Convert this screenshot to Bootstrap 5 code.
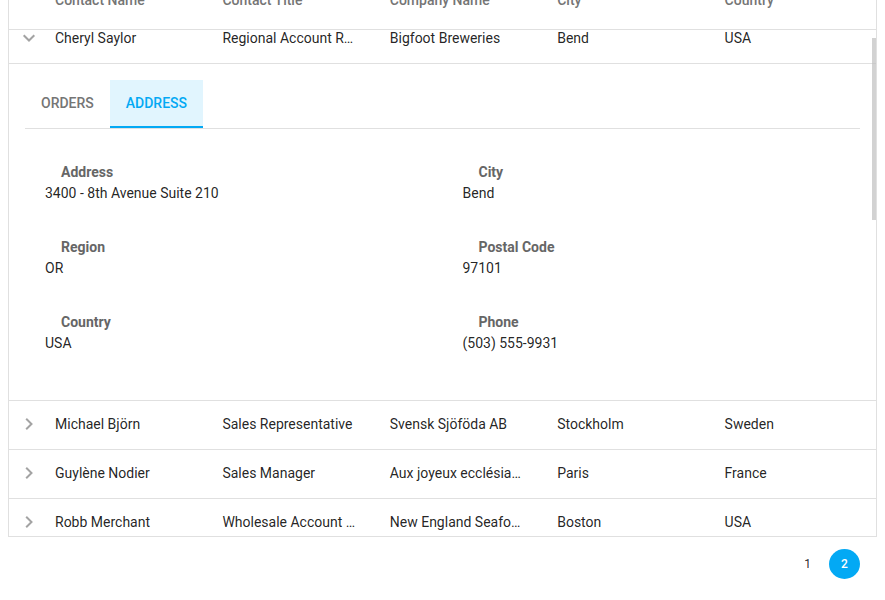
<!DOCTYPE html>
<html lang="en">
<head>
<meta charset="utf-8">
<meta name="viewport" content="width=device-width, initial-scale=1">
<title>Contacts</title>
<link href="https://cdn.jsdelivr.net/npm/bootstrap@5.3.0/dist/css/bootstrap.min.css" rel="stylesheet">
<style>
  :root { --line: #e0e0e0; --accent: #03a9f4; --muted: #757575; }
  body { font-family: Roboto, sans-serif; font-size: 14px; line-height: 21px; color: rgba(0, 0, 0, .87); }
  .grid-panel { border: 1px solid var(--line); border-top: 0; min-height: 0; }
  .grid-head { margin-top: -27px; border-bottom: 1px solid var(--line); }
  .grid-rows { min-height: 0; }
  .grid-rows .scrolled { margin-top: -15px; }
  .grid-table { table-layout: fixed; border-collapse: separate; border-spacing: 0; }
  .grid-table .col-expand { width: 30px; }
  .grid-table th { height: 56px; padding: 0 16px 2px; font-weight: 500; color: var(--muted); }
  .grid-table td { height: 49px; padding: 0 16px 2px; border-bottom: 1px solid var(--line); }
  .grid-table td.expand-cell { padding: 0 0 2px 10px; }
  .grid-table td.detail-cell { padding: 16px; }
  .expander { color: #a3a3a3; width: 20px; height: 20px; }
  .detail-tabs { --bs-nav-tabs-border-width: 0; border-bottom: 1px solid var(--line); }
  .detail-tabs .nav-link { height: 48px; padding: 0 16px 2px; margin: 0; border: 0; border-radius: 0; font-weight: 500; color: var(--muted); }
  .detail-tabs .nav-link.active { color: var(--accent); background: #e1f5fe; box-shadow: inset 0 -2px var(--accent); }
  .address-form { padding: 13px 0 17px; }
  .address-form > div { padding: 20px 20px 13px; }
  .address-form dt { padding-left: 16px; font-weight: 700; color: #666; }
  .scroll-thumb { top: 8px; right: 0; width: 4px; height: 36%; background: rgba(191, 191, 191, .7); }
  .pager { padding: 12px 17px 21px; gap: 6px; font-size: 12px; }
  .pager .page-btn { width: 31px; height: 30px; padding: 0; border: 0; font-size: 12px; color: inherit; }
  .pager .page-btn.active { background: var(--accent); color: #fff; font-weight: 500; }
</style>
<script src="https://cdn.jsdelivr.net/npm/bootstrap@5.3.0/dist/js/bootstrap.bundle.min.js"></script>
</head>
<body class="bg-white overflow-hidden">
<main class="d-flex flex-column vh-100 px-2">
  <section class="grid-panel d-flex flex-column flex-fill" aria-label="Contacts">
    <div class="grid-head">
      <table class="grid-table w-100">
        <colgroup><col class="col-expand"><col><col><col><col><col></colgroup>
        <thead><tr><td class="border-0 p-0"></td><th scope="col">Contact Name</th><th scope="col">Contact Title</th><th scope="col">Company Name</th><th scope="col">City</th><th scope="col">Country</th></tr></thead>
      </table>
    </div>
    <div class="grid-rows position-relative overflow-hidden flex-fill">
      <div class="scrolled">
        <table class="grid-table w-100">
          <colgroup><col class="col-expand"><col><col><col><col><col></colgroup>
          <tbody>
            <tr>
              <td class="expand-cell"><button type="button" class="expander btn p-0 border-0 d-flex align-items-center" aria-label="Collapse" aria-expanded="true"><svg width="20" height="20" viewBox="0 0 20 20" fill="none" stroke="currentColor" stroke-width="2"><path d="M4.7 7.2 10 12.5l5.3-5.3"/></svg></button></td>
              <td class="text-truncate">Cheryl Saylor</td><td class="text-truncate">Regional Account Rep.</td><td class="text-truncate">Bigfoot Breweries</td><td class="text-truncate">Bend</td><td class="text-truncate">USA</td>
            </tr>
            <tr>
              <td colspan="6" class="detail-cell">
                <div class="nav nav-tabs detail-tabs" role="tablist">
                  <button type="button" class="nav-link" role="tab" aria-selected="false">ORDERS</button>
                  <button type="button" class="nav-link active" role="tab" aria-selected="true">ADDRESS</button>
                </div>
                <dl class="address-form row g-0 mb-0">
                  <div class="col-6"><dt>Address</dt><dd class="mb-0">3400 - 8th Avenue Suite 210</dd></div>
                  <div class="col-6"><dt>City</dt><dd class="mb-0">Bend</dd></div>
                  <div class="col-6"><dt>Region</dt><dd class="mb-0">OR</dd></div>
                  <div class="col-6"><dt>Postal Code</dt><dd class="mb-0">97101</dd></div>
                  <div class="col-6"><dt>Country</dt><dd class="mb-0">USA</dd></div>
                  <div class="col-6"><dt>Phone</dt><dd class="mb-0">(503) 555-9931</dd></div>
                </dl>
              </td>
            </tr>
            <tr>
              <td class="expand-cell"><button type="button" class="expander btn p-0 border-0 d-flex align-items-center" aria-label="Expand" aria-expanded="false"><svg width="20" height="20" viewBox="0 0 20 20" fill="none" stroke="currentColor" stroke-width="2"><path d="M7.2 4.7 12.5 10l-5.3 5.3"/></svg></button></td>
              <td class="text-truncate">Michael Björn</td><td class="text-truncate">Sales Representative</td><td class="text-truncate">Svensk Sjöföda AB</td><td class="text-truncate">Stockholm</td><td class="text-truncate">Sweden</td>
            </tr>
            <tr>
              <td class="expand-cell"><button type="button" class="expander btn p-0 border-0 d-flex align-items-center" aria-label="Expand" aria-expanded="false"><svg width="20" height="20" viewBox="0 0 20 20" fill="none" stroke="currentColor" stroke-width="2"><path d="M7.2 4.7 12.5 10l-5.3 5.3"/></svg></button></td>
              <td class="text-truncate">Guylène Nodier</td><td class="text-truncate">Sales Manager</td><td class="text-truncate">Aux joyeux ecclésiastiques</td><td class="text-truncate">Paris</td><td class="text-truncate">France</td>
            </tr>
            <tr>
              <td class="expand-cell"><button type="button" class="expander btn p-0 border-0 d-flex align-items-center" aria-label="Expand" aria-expanded="false"><svg width="20" height="20" viewBox="0 0 20 20" fill="none" stroke="currentColor" stroke-width="2"><path d="M7.2 4.7 12.5 10l-5.3 5.3"/></svg></button></td>
              <td class="text-truncate">Robb Merchant</td><td class="text-truncate">Wholesale Account Agent</td><td class="text-truncate">New England Seafood</td><td class="text-truncate">Boston</td><td class="text-truncate">USA</td>
            </tr>
          </tbody>
        </table>
      </div>
      <div class="scroll-thumb position-absolute"></div>
    </div>
  </section>
  <nav class="pager d-flex justify-content-end" aria-label="Pages">
    <button type="button" class="page-btn btn rounded-circle">1</button>
    <button type="button" class="page-btn btn rounded-circle active" aria-current="page">2</button>
  </nav>
</main>
</body>
</html>
